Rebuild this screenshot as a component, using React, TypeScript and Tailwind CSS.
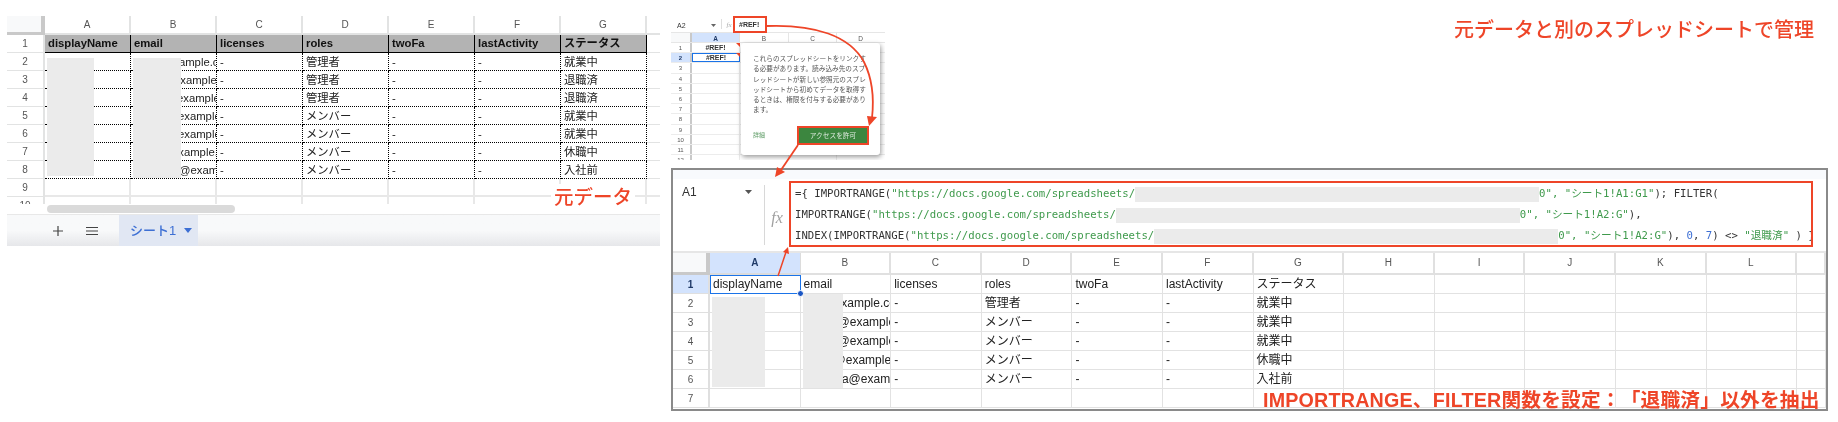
import React from "react";

const SANS = "[font-family:'Liberation_Sans','Noto_Sans_CJK_JP',sans-serif]";

const leftRows = [
  { ml: "ml-[33px]", mail: "example.com", role: "管理者", st: "就業中" },
  { ml: "ml-[40px]", mail: "example.com", role: "管理者", st: "退職済" },
  { ml: "ml-[43px]", mail: "example.com", role: "管理者", st: "退職済" },
  { ml: "ml-[44px]", mail: "example.com", role: "メンバー", st: "就業中" },
  { ml: "ml-[44px]", mail: "example.com", role: "メンバー", st: "就業中" },
  { ml: "ml-[38px]", mail: "example.com", role: "メンバー", st: "休職中" },
  { ml: "ml-[45px]", mail: "@example.com", role: "メンバー", st: "入社前" },
];

const rightRows = [
  { ml: "ml-[31px]", mail: "example.com", role: "管理者", st: "就業中" },
  { ml: "ml-[34px]", mail: "@example.com", role: "メンバー", st: "就業中" },
  { ml: "ml-[34px]", mail: "@example.com", role: "メンバー", st: "就業中" },
  { ml: "ml-[30px]", mail: "@example.com", role: "メンバー", st: "休職中" },
  { ml: "ml-[35px]", mail: "ta@example.com", role: "メンバー", st: "入社前" },
];

const leftCols = ["A", "B", "C", "D", "E", "F", "G"];
const leftHead = ["displayName", "email", "licenses", "roles", "twoFa", "lastActivity", "ステータス"];
const rightCols = ["A", "B", "C", "D", "E", "F", "G", "H", "I", "J", "K", "L", ""];

function LeftSheet() {
  const cell = "h-[18px] border-r border-b border-dotted border-black pl-[3px] overflow-hidden whitespace-nowrap leading-[18px]";
  const rowLabel = "h-[18px] bg-white border-r-2 border-b border-[#e2e3e3] text-center text-[10px] leading-[18px] text-[#555]";
  return (
    <div className="w-[653px]">
      <div className="relative h-[188px] overflow-hidden text-[11.3px] text-[#222] grid grid-cols-[38px_repeat(7,86px)_1fr] grid-rows-[19px_repeat(9,18px)]">
        <div className="bg-[#f8f9fa] border-r-[4px] border-b-[3px] border-[#c9c9c9]" />
        {leftCols.map((c) => (
          <div key={c} className="h-[19px] border-r-2 border-b-2 border-[#e2e3e3] text-center text-[10px] leading-[18px] text-[#555]">{c}</div>
        ))}
        <div className="h-[19px] border-b-2 border-[#e2e3e3]" />

        <div className={rowLabel}>1</div>
        {leftHead.map((h) => (
          <div key={h} className="h-[18px] bg-[#b3b3b3] border-r border-r-black border-b border-b-black border-b-dotted pl-[3px] font-bold leading-[17px] text-[#111] overflow-hidden whitespace-nowrap">{h}</div>
        ))}
        <div className="h-[18px] border-b border-[#e2e3e3]" />

        {leftRows.map((r, i) => (
          <React.Fragment key={i}>
            <div className={rowLabel}>{i + 2}</div>
            <div className={cell} />
            <div className={cell}><span className={r.ml}>{r.mail}</span></div>
            <div className={cell}>-</div>
            <div className={cell}>{r.role}</div>
            <div className={cell}>-</div>
            <div className={cell}>-</div>
            <div className={cell}>{r.st}</div>
            <div className="h-[18px] border-b border-[#e2e3e3]" />
          </React.Fragment>
        ))}

        {[9, 10].map((n) => (
          <React.Fragment key={n}>
            <div className={rowLabel}>{n}</div>
            {leftCols.map((c) => (
              <div key={c} className="h-[18px] border-r-2 border-b-2 border-[#e8e8e8]" />
            ))}
            <div className="h-[18px] border-b-2 border-[#e8e8e8]" />
          </React.Fragment>
        ))}

        <div className="absolute left-[40px] top-[42px] w-[47px] h-[118px] bg-[#ebebeb]" />
        <div className="absolute left-[126px] top-[42px] w-[48px] h-[120px] bg-[#ebebeb]" />
      </div>

      <div className="h-[11px] bg-white border-b border-[#e8e8e8] flex items-center">
        <div className="ml-[40px] w-[188px] h-[8px] rounded-full bg-[#dadada]" />
      </div>

      <div className="h-[31px] flex items-stretch bg-gradient-to-b from-[#f8f9fa] via-[#f8f9fa] to-[#e6e7ea]">
        <svg width="14" height="14" viewBox="0 0 14 14" className="ml-[44px] self-center" aria-hidden="true">
          <path d="M7 2v10M2 7h10" stroke="#444" strokeWidth="1.2" />
        </svg>
        <svg width="14" height="10" viewBox="0 0 14 10" className="ml-[20px] self-center" aria-hidden="true">
          <path d="M1 1.5h12M1 5h12M1 8.5h12" stroke="#444" strokeWidth="1.2" />
        </svg>
        <div className="ml-[20px] w-[79px] bg-[#e1e7f3] flex items-center pl-[11px] text-[13px] text-[#3d6fd4] font-medium">
          <span>シート1</span>
          <svg width="8" height="5" viewBox="0 0 8 5" className="ml-[8px]" aria-hidden="true">
            <path d="M0 0h8L4 5z" fill="#3d6fd4" />
          </svg>
        </div>
      </div>
    </div>
  );
}

function MiniSheet() {
  const rows = [1, 2, 3, 4, 5, 6, 7, 8, 9, 10, 11, 12];
  return (
    <div className="relative w-[214px] h-[144px] overflow-hidden text-[#555]">
      <div className="h-[16px] flex items-start text-[7px]">
        <span className="ml-[6px] mt-[5px] leading-[9px] text-[#333]">A2</span>
        <svg width="5" height="3" viewBox="0 0 5 3" className="ml-[25px] mt-[8px]" aria-hidden="true">
          <path d="M0 0h5L2.500 3z" fill="#666" />
        </svg>
        <div className="ml-[5px] mt-[3px] h-[10px] border-l border-[#ddd]" />
        <span className="ml-[5px] mt-[4px] italic text-[#aaa] [font-family:'Liberation_Serif',serif]">fx</span>
      </div>
      <div className="h-[11px] flex text-[6.5px] leading-[11px] text-center border-t border-b border-[#e6e6e6]">
        <div className="w-[21px] bg-[#f8f9fa] border-r-2 border-[#c9c9c9]" />
        <div className="w-[48px] bg-[#d3e3fd] font-bold text-[#1f3a68] border-r border-[#e0e0e0]">A</div>
        <div className="w-[49px] border-r border-[#e6e6e6]">B</div>
        <div className="w-[48px] border-r border-[#e6e6e6]">C</div>
        <div className="w-[47px]">D</div>
      </div>
      {rows.map((n) => (
        <div key={n} className="h-[10.200px] flex text-[6px] leading-[10px] text-center border-b border-[#ececec]">
          <div className={n === 2 ? "w-[21px] bg-[#d3e3fd] text-[#1f3a68] font-bold border-r-2 border-[#c9c9c9]" : "w-[21px] border-r-2 border-[#c9c9c9]"}>{n}</div>
          <div className={n === 2 ? "w-[48px] text-[7px] font-bold text-[#333] outline outline-[#1a73e8] -outline-offset-1" : "w-[48px] text-[7px] font-bold text-[#333] border-r border-[#ececec]"}>
            {n <= 2 ? "#REF!" : ""}
          </div>
          <div className="w-[49px] border-r border-[#ececec]" />
          <div className="w-[48px] border-r border-[#ececec]" />
          <div className="w-[47px]" />
        </div>
      ))}
      <svg className="absolute left-[65px] top-[27px]" width="4" height="14" viewBox="0 0 4 14" aria-hidden="true">
        <path d="M0 0h4v4zM0 10h4v4z" fill="#ee4528" />
      </svg>
      <div className="absolute left-[62px] top-0 w-[34px] h-[17px] border-2 border-[#ee4528] bg-white pl-[4px] text-[7px] font-bold leading-[13px] text-[#333]">#REF!</div>
      <div className="absolute left-[70px] top-[27px] w-[139px] h-[112px] rounded-[3px] bg-white shadow-[1px_2px_5px_rgba(0,0,0,0.4)] pl-[12px] pr-[11px] pt-[11px] flex flex-col">
        <p className="text-[6.65px] leading-[10.300px] text-[#555] whitespace-nowrap">
          これらのスプレッドシートをリンクす<br />
          る必要があります。読み込み先のスプ<br />
          レッドシートが新しい参照元のスプレ<br />
          ッドシートから初めてデータを取得す<br />
          るときは、権限を付与する必要があり<br />
          ます。
        </p>
        <div className="mt-[10px] flex items-center justify-between">
          <span className="text-[6px] text-[#5b9a63]">詳細</span>
          <div className="w-[72px] h-[19px] border-2 border-[#ee4528] bg-[#3c863f] text-center text-[6.700px] leading-[15px] text-[#dfeadf]">アクセスを許可</div>
        </div>
      </div>
    </div>
  );
}

function Str({ children }: { children: React.ReactNode }) {
  return <span className="text-[#3f9a4c]">{children}</span>;
}

function Mask({ w }: { w: string }) {
  return <span className={`inline-block h-[15px] align-middle bg-[#ebebeb] ${w}`} />;
}

function MainSheet() {
  const rowLabel = "h-[19px] border-r-2 border-b border-[#dfdfdf] text-center text-[10px] leading-[19px] text-[#555]";
  const cell = "h-[19px] border-r border-b border-[#e2e2e2] pl-[3px] leading-[19px] overflow-hidden whitespace-nowrap";
  return (
    <div className="mt-[8px] w-[1157px] h-[243px] border-2 border-[#8a8a8a] flex flex-col overflow-hidden">
      <div className="h-[9px] shrink-0 bg-[#f8fafd]" />
      <div className="h-[74px] shrink-0 flex border-b-2 border-[#e6e6e6]">
        <div className="w-[92px] my-[6px] border-r border-[#d8d8d8] flex items-start pl-[9px] pr-[12px] justify-between text-[12px] leading-[14px] text-[#333]">
          <span>A1</span>
          <svg width="7" height="4" viewBox="0 0 7 4" className="mt-[5px]" aria-hidden="true">
            <path d="M0 0h7L3.500 4z" fill="#555" />
          </svg>
        </div>
        <div className="w-[24px] flex justify-center items-center pt-[6px] italic text-[16px] text-[#a0a0a0] [font-family:'Liberation_Serif',serif]">fx</div>
        <div className="mt-[2px] w-[1024px] h-[66px] overflow-hidden border-2 border-[#ee4528] pl-[4px] text-[10.660px] leading-[21px] text-[#333] whitespace-nowrap [font-family:'DejaVu_Sans_Mono','Noto_Sans_CJK_JP',monospace] [font-kerning:none]">
          <div>={"{ "}IMPORTRANGE(<Str>"https://docs.google.com/spreadsheets/<Mask w="w-[404px]" /><span>0", </span>"シート1!A1:G1"</Str>); FILTER(</div>
          <div>IMPORTRANGE(<Str>"https://docs.google.com/spreadsheets/<Mask w="w-[404px]" /><span>0", </span>"シート1!A2:G"</Str>),</div>
          <div>INDEX(IMPORTRANGE(<Str>"https://docs.google.com/spreadsheets/<Mask w="w-[404px]" /><span>0", </span>"シート1!A2:G"</Str>), <span className="text-[#3d6fd4]">0</span>, <span className="text-[#3d6fd4]">7</span>) {"<>"} <Str>"退職済"</Str> ) {"}"}</div>
        </div>
      </div>

      <div className="relative min-h-0 flex-1 overflow-hidden text-[12px] text-[#222] grid grid-cols-[37px_repeat(12,90.600px)_1fr] grid-rows-[22px_repeat(7,19px)]">
        <div className="bg-[#f8f9fa] border-r-[4px] border-b-[3px] border-[#c9c9c9]" />
        {rightCols.map((c, i) => (
          <div
            key={i}
            className={
              c === "A"
                ? "h-[22px] bg-[#d3e3fd] border-r border-b-2 border-[#dcdcdc] text-center text-[10px] font-bold leading-[20px] text-[#1f3a68]"
                : "h-[22px] border-r-2 border-b-2 border-[#e0e0e0] text-center text-[10px] leading-[20px] text-[#555]"
            }
          >
            {c}
          </div>
        ))}
        <div className="h-[19px] border-r-2 border-b border-[#dfdfdf] bg-[#d3e3fd] text-center text-[10px] font-bold leading-[19px] text-[#1f3a68]">1</div>
        {leftHead.map((h) => (
          <div key={h} className={cell}>{h}</div>
        ))}
        {rightCols.slice(7).map((c, i) => (
          <div key={i} className={cell} />
        ))}
        {rightRows.map((r, i) => (
          <React.Fragment key={i}>
            <div className={rowLabel}>{i + 2}</div>
            <div className={cell} />
            <div className={cell}><span className={r.ml}>{r.mail}</span></div>
            <div className={cell}>-</div>
            <div className={cell}>{r.role}</div>
            <div className={cell}>-</div>
            <div className={cell}>-</div>
            <div className={cell}>{r.st}</div>
            {rightCols.slice(7).map((c, j) => (
              <div key={j} className={cell} />
            ))}
          </React.Fragment>
        ))}
        <React.Fragment>
          <div className={rowLabel}>7</div>
          {rightCols.map((c, j) => (
            <div key={j} className={cell} />
          ))}
        </React.Fragment>

        <div className="absolute left-[37px] top-[22px] w-[91px] h-[19px] border border-[#1a73e8]" />
        <div className="absolute left-[124px] top-[37px] w-[7px] h-[7px] rounded-full bg-[#1a56c4] border border-white" />
        <div className="absolute left-[39px] top-[44px] w-[53px] h-[90px] bg-[#ebebeb]" />
        <div className="absolute left-[130px] top-[41px] w-[40px] h-[94px] bg-[#ebebeb]" />
      </div>
    </div>
  );
}

export default function App() {
  return (
    <div className={`relative w-[1838px] h-[422px] overflow-hidden bg-white flex items-start pt-[16px] pl-[7px] blur-[0.35px] ${SANS}`}>
      <LeftSheet />
      <div className="ml-[11px] w-[1157px]">
        <MiniSheet />
        <MainSheet />
      </div>

      <div className="absolute left-[551px] top-[184px] px-[3px] bg-white text-[19.500px] leading-[26px] font-medium text-[#ee4528]">元データ</div>
      <div className="absolute left-[1454px] top-[16px] text-[20px] leading-[28px] font-medium text-[#ee4528] whitespace-nowrap">元データと別のスプレッドシートで管理</div>
      <div className="absolute left-[1263px] top-[387px] text-[19.700px] tracking-[0.2px] leading-[26px] font-bold text-[#ee4528] whitespace-nowrap [text-spacing-trim:space-all]">IMPORTRANGE、FILTER関数を設定：「退職済」以外を抽出</div>

      <svg className="absolute left-0 top-0 pointer-events-none" width="1838" height="422" viewBox="0 0 1838 422" fill="none" aria-hidden="true">
        <path d="M766 26C815 24 850 36 864 62C873 80 874 100 872 118" stroke="#ee4528" strokeWidth="1.800" />
        <path d="M867 116L877 117L869 126Z" fill="#ee4528" />
        <path d="M798 145L781 170" stroke="#ee4528" strokeWidth="1.800" />
        <path d="M775 177L777 167L785 172Z" fill="#ee4528" />
        <path d="M778 276L786 252" stroke="#ee4528" strokeWidth="1.500" />
        <path d="M788 247L789 254L783 252Z" fill="#ee4528" />
      </svg>
    </div>
  );
}
